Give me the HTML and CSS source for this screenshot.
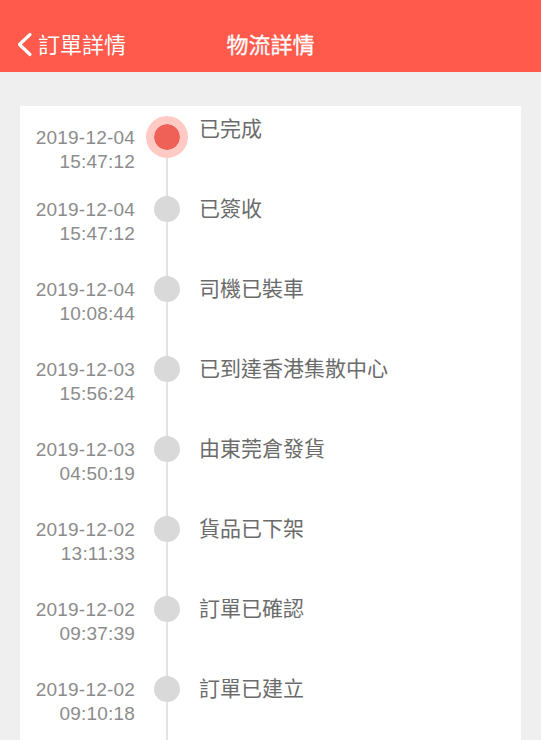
FILE: index.html
```html
<!DOCTYPE html>
<html lang="zh-Hant">
  <head>
    <meta charset="UTF-8" />
    <meta name="viewport" content="width=device-width, initial-scale=1.0" />
    <title>物流詳情</title>
    <link rel="stylesheet" href="styles.css">
  </head>
  <body>
    <header class="topbar">
      <a class="back" href="#">
        <svg class="back-icon" width="17" height="25" viewBox="0 0 17 25">
          <path d="M14 2.5 L3.5 12.5 L14 22.5" fill="none" stroke="#fff" stroke-width="3.2" stroke-linecap="round" stroke-linejoin="round" />
        </svg>
        <span>訂單詳情</span>
      </a>
      <h1 class="title">物流詳情</h1>
      <div></div>
    </header>

    <main class="card">
      <ul class="timeline">
        <li class="step current">
          <div class="date">2019-12-04<br>15:47:12</div>
          <div class="axis"><span class="dot"></span><span class="line"></span></div>
          <div class="label">已完成</div>
        </li>
        <li class="step">
          <div class="date">2019-12-04<br>15:47:12</div>
          <div class="axis"><span class="dot"></span><span class="line"></span></div>
          <div class="label">已簽收</div>
        </li>
        <li class="step">
          <div class="date">2019-12-04<br>10:08:44</div>
          <div class="axis"><span class="dot"></span><span class="line"></span></div>
          <div class="label">司機已裝車</div>
        </li>
        <li class="step">
          <div class="date">2019-12-03<br>15:56:24</div>
          <div class="axis"><span class="dot"></span><span class="line"></span></div>
          <div class="label">已到達香港集散中心</div>
        </li>
        <li class="step">
          <div class="date">2019-12-03<br>04:50:19</div>
          <div class="axis"><span class="dot"></span><span class="line"></span></div>
          <div class="label">由東莞倉發貨</div>
        </li>
        <li class="step">
          <div class="date">2019-12-02<br>13:11:33</div>
          <div class="axis"><span class="dot"></span><span class="line"></span></div>
          <div class="label">貨品已下架</div>
        </li>
        <li class="step">
          <div class="date">2019-12-02<br>09:37:39</div>
          <div class="axis"><span class="dot"></span><span class="line"></span></div>
          <div class="label">訂單已確認</div>
        </li>
        <li class="step">
          <div class="date">2019-12-02<br>09:10:18</div>
          <div class="axis"><span class="dot"></span><span class="line"></span></div>
          <div class="label">訂單已建立</div>
        </li>
      </ul>
    </main>
  </body>
</html>
```

FILE: styles.css
```css
* {
  margin: 0;
  padding: 0;
  box-sizing: border-box;
}
body {
  background: #efefef;
  font-family: "Liberation Sans", "Noto Sans CJK TC", sans-serif;
}
.topbar {
  display: grid;
  grid-template-columns: 1fr auto 1fr;
  align-items: center;
  height: 72px;
  padding: 14px 16px 0;
  background: #ff5a4c;
  color: #fff;
}
.back {
  display: flex;
  align-items: center;
  gap: 5px;
  color: #fff;
  text-decoration: none;
  font-family: "Noto Sans CJK TC", sans-serif;
  font-size: 22px;
  line-height: 56px;
}
.back-icon {
  display: block;
  margin-top: 2px;
}
.title {
  font-family: "Noto Sans CJK TC", sans-serif;
  font-size: 22px;
  font-weight: 400;
  line-height: 56px;
  -webkit-text-stroke: 0.3px #fff;
}
.card {
  margin: 34px 20px 0;
  padding-top: 10px;
  background: #fff;
}
.timeline {
  list-style: none;
}
.step {
  display: flex;
  align-items: flex-start;
  height: 80px;
}
.date {
  width: 115px;
  margin-top: 2px;
  margin-right: 11px;
  text-align: right;
  font-size: 19px;
  letter-spacing: 0.2px;
  line-height: 24px;
  color: #8c8c8c;
}
.current .date {
  margin-top: 10px;
}
.axis {
  display: flex;
  flex-direction: column;
  align-items: center;
  width: 42px;
  height: 100%;
}
.dot {
  flex: none;
  width: 26px;
  height: 26px;
  border-radius: 50%;
  background: #d9d9d9;
}
.current .dot {
  width: 42px;
  height: 42px;
  border: 8px solid #ffc9c4;
  background: #ef6156;
  background-clip: padding-box;
}
.line {
  flex: 1;
  width: 2px;
  background: #e3e3e3;
}
.label {
  margin-left: 11px;
  font-family: "Noto Sans CJK TC", sans-serif;
  font-size: 21px;
  line-height: 22px;
  color: #6b6b6b;
}
```
